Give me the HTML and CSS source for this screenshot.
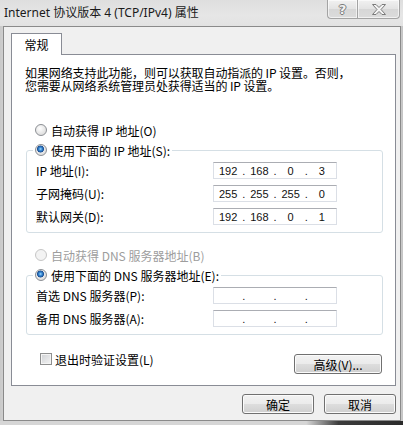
FILE: index.html
```html
<!DOCTYPE html>
<html lang="zh-CN">
<head>
  <meta charset="UTF-8" />
  <title>Internet 协议版本 4 (TCP/IPv4) 属性</title>
  <link rel="stylesheet" href="styles.css">
</head>
<body>

<div class="window">
  <div class="titlebar">
    <span class="title">Internet 协议版本 4 (TCP/IPv4) 属性</span>
    <div class="caption-btns">
      <span class="cap help">?</span>
      <span class="cap close">
        <svg width="16" height="11" viewBox="0 0 16 11">
          <polygon points="1.5,0.5 5,0.5 8,3.5 11,0.5 14.5,0.5 10,5.5 14.5,10.5 11,10.5 8,7.5 5,10.5 1.5,10.5 6,5.5" fill="#f4f4f4" stroke="#7a7a7a" stroke-width="1" stroke-linejoin="round"/>
        </svg>
      </span>
    </div>
  </div>

  <div class="client">
    <div class="tabs">
      <span class="tab active">常规</span>
    </div>

    <div class="panel">
      <p class="desc">如果网络支持此功能，则可以获取自动指派的 IP 设置。否则，<br>您需要从网络系统管理员处获得适当的 IP 设置。</p>

      <div class="opt"><span class="radio"></span>自动获得 IP 地址(O)</div>
      <fieldset class="group">
        <legend class="opt"><span class="radio checked"></span>使用下面的 IP 地址(S):</legend>
        <div class="fields">
          <span class="lbl">IP 地址(I):</span>
          <div class="ipbox"><span>192</span><i>.</i><span>168</span><i>.</i><span>0</span><i>.</i><span>3</span></div>
          <span class="lbl">子网掩码(U):</span>
          <div class="ipbox"><span>255</span><i>.</i><span>255</span><i>.</i><span>255</span><i>.</i><span>0</span></div>
          <span class="lbl">默认网关(D):</span>
          <div class="ipbox"><span>192</span><i>.</i><span>168</span><i>.</i><span>0</span><i>.</i><span>1</span></div>
        </div>
      </fieldset>

      <div class="opt second disabled"><span class="radio"></span>自动获得 DNS 服务器地址(B)</div>
      <fieldset class="group">
        <legend class="opt"><span class="radio checked"></span>使用下面的 DNS 服务器地址(E):</legend>
        <div class="fields">
          <span class="lbl">首选 DNS 服务器(P):</span>
          <div class="ipbox"><span></span><i>.</i><span></span><i>.</i><span></span><i>.</i><span></span></div>
          <span class="lbl">备用 DNS 服务器(A):</span>
          <div class="ipbox"><span></span><i>.</i><span></span><i>.</i><span></span><i>.</i><span></span></div>
        </div>
      </fieldset>

      <div class="bottom-row">
        <div class="check-opt"><span class="checkbox"></span>退出时验证设置(L)</div>
        <button class="btn advanced">高级(V)...</button>
      </div>
    </div>

    <div class="actions">
      <button class="btn">确定</button>
      <button class="btn">取消</button>
    </div>
  </div>
  <div class="frame-bottom"></div>
</div>

</body>
</html>
```

FILE: styles.css
```css
body {
  margin: 0;
  font-family: "Noto Sans CJK SC", sans-serif;
  font-size: 12px;
  color: #000;
  background: #d4d4d4;
}
.window {
  width: 403px;
  height: 425px;
  overflow: hidden;
  display: flex;
  flex-direction: column;
  background: linear-gradient(to right, #c9c9c9, #d9d9d9 2%, #d9d9d9 98%, #c4c4c4);
}

/* title bar */
.titlebar {
  height: 26px;
  display: flex;
  align-items: flex-start;
  background: linear-gradient(#dedede, #e6e6e6 60%, #e2e2e2);
}
.title {
  padding-left: 4px;
  line-height: 26px;
  font-family: "Noto Sans", "Noto Sans CJK SC", sans-serif;
  font-size: 12px;
  color: #1a1a1a;
}
.caption-btns {
  margin-left: auto;
  margin-right: 3px;
  display: flex;
}
.cap {
  height: 18px;
  display: flex;
  align-items: center;
  justify-content: center;
  border: 1px solid #a3a3a3;
  border-top: none;
  background: linear-gradient(#f1f1f1, #e3e3e3 50%, #d6d6d6 50%, #dcdcdc);
  box-shadow: inset 0 0 0 1px rgba(255,255,255,0.6);
}
.help {
  width: 29px;
  border-right: none;
  border-bottom-left-radius: 4px;
  font-family: "DejaVu Sans", sans-serif;
  font-size: 13px;
  font-weight: bold;
  color: #f2f2f2;
  text-shadow: 1px 0 0 #7a7a7a, -1px 0 0 #7a7a7a, 0 1px 0 #7a7a7a, 0 -1px 0 #7a7a7a;
}
.close {
  width: 41px;
  border-bottom-right-radius: 4px;
}

/* client area */
.client {
  margin-left: 3px;
  width: 396px;
  height: 393px;
  border: 1px solid #8a8a8a;
  background: #f0f0f0;
}
.tabs {
  padding: 6px 0 0 7px;
  display: flex;
}
.tab {
  height: 21px;
  width: 49px;
  display: flex;
  align-items: center;
  justify-content: center;
  border: 1px solid #898c95;
  border-bottom: none;
  background: #fff;
  margin-bottom: -1px;
  position: relative;
  z-index: 1;
}
.panel {
  margin-left: 7px;
  width: 383px;
  height: 330px;
  border: 1px solid #898c95;
  background: #fff;
}
.desc {
  margin: 11px 0 0 13px;
  line-height: 13px;
  letter-spacing: -0.1px;
}

/* radios */
.opt {
  display: flex;
  align-items: center;
  gap: 4px;
  height: 14px;
  margin: 31px 0 0 23px;
}
.opt.second {
  margin-top: 15px;
}
.opt.disabled {
  color: #9d9d9d;
}
.radio {
  width: 12px;
  height: 12px;
  box-sizing: border-box;
  border-radius: 50%;
  border: 1px solid #8c8f94;
  background: radial-gradient(circle at 40% 35%, #ffffff, #e4e4e4 60%, #d2d2d2);
}
.disabled .radio {
  border-color: #c6c6c6;
  background: #f3f3f3;
}
.radio.checked {
  background:
    radial-gradient(circle at 45% 40%, #a8dcff 0, #3c8fd8 1.5px, #1b4f94 3.2px, transparent 3.8px),
    radial-gradient(circle at 40% 35%, #ffffff, #e4e4e4 60%, #d2d2d2);
}

/* group boxes */
.group {
  margin: 6px 0 0 14px;
  width: 337px;
  padding: 5px 9px 7px 9px;
  border: 1px solid #d5dfe5;
  border-radius: 3px;
}
.group legend.opt {
  margin: 0 0 0 -3px;
  padding: 0 2px;
}
.fields {
  display: grid;
  grid-template-columns: 177px 124px;
  grid-auto-rows: 17px;
  row-gap: 6px;
  align-items: center;
}
.lbl {
  line-height: 17px;
}
.ipbox {
  height: 17px;
  box-sizing: border-box;
  border: 1px solid #dbdfe6;
  border-top-color: #abadb3;
  display: flex;
  align-items: center;
  font-family: "Liberation Sans", sans-serif;
  font-size: 11px;
  color: #111;
}
.ipbox span {
  flex: 1;
  text-align: center;
}
.ipbox i {
  font-style: normal;
  width: 3px;
  text-align: center;
}

/* bottom row in panel */
.bottom-row {
  display: flex;
  align-items: flex-start;
  margin: 18px 13px 0 28px;
}
.check-opt {
  display: flex;
  align-items: center;
  gap: 3px;
  height: 12px;
}
.checkbox {
  width: 12px;
  height: 12px;
  box-sizing: border-box;
  border: 1px solid #8e8f8f;
  background: linear-gradient(135deg, #cfd1d4, #f4f4f4);
  box-shadow: inset 0 0 0 1px #f4f4f4;
}
.btn {
  height: 20px;
  padding: 0;
  font-family: "Noto Sans CJK SC", sans-serif;
  font-size: 12px;
  color: #000;
  border: 1px solid #707070;
  border-radius: 3px;
  background: linear-gradient(#f2f2f2, #ebebeb 48%, #dddddd 52%, #cfcfcf);
  box-shadow: inset 0 0 0 1px #fbfbfb;
}
.advanced {
  margin-left: auto;
  margin-top: 1px;
  width: 88px;
}

.actions {
  display: flex;
  justify-content: flex-end;
  gap: 10px;
  margin-top: 8px;
  padding-right: 4px;
}
.actions .btn {
  width: 72px;
}

.frame-bottom {
  flex: 1;
  background: linear-gradient(to right, #d6d6d6 76%, #3c3c3c 84%, #2a2a2a);
}
```
